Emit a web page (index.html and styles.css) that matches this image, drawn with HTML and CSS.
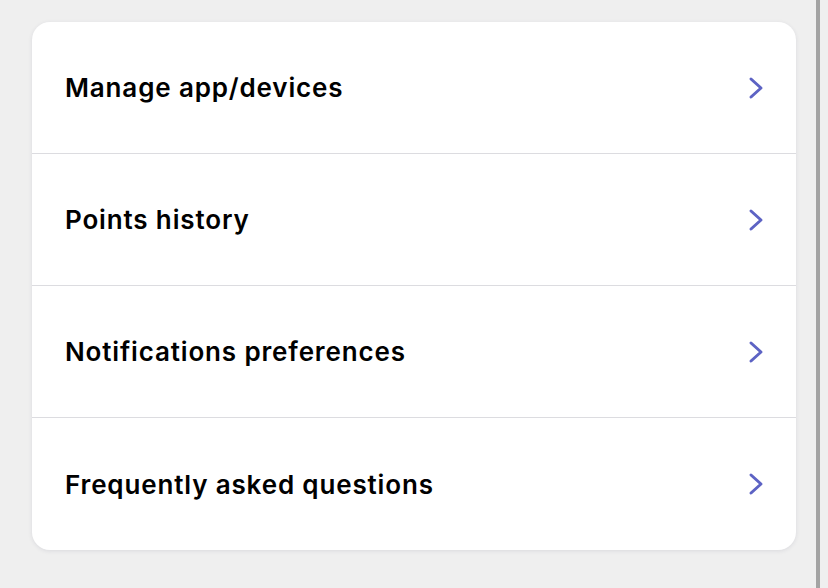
FILE: index.html
```html
<!DOCTYPE html>
<html>
<head>
<meta charset="utf-8">
<link rel="stylesheet" href="styles.css">
</head>
<body>
<div class="page">
  <div class="card">
    <div class="row"><span class="label">Manage app/devices</span><svg class="chev" viewBox="0 0 16 24" width="16" height="24"><path d="M3 3 L13 12 L3 21" fill="none" stroke="#5d63c4" stroke-width="3" stroke-linecap="round" stroke-linejoin="round"/></svg></div>
    <div class="row"><span class="label">Points history</span><svg class="chev" viewBox="0 0 16 24" width="16" height="24"><path d="M3 3 L13 12 L3 21" fill="none" stroke="#5d63c4" stroke-width="3" stroke-linecap="round" stroke-linejoin="round"/></svg></div>
    <div class="row"><span class="label">Notifications preferences</span><svg class="chev" viewBox="0 0 16 24" width="16" height="24"><path d="M3 3 L13 12 L3 21" fill="none" stroke="#5d63c4" stroke-width="3" stroke-linecap="round" stroke-linejoin="round"/></svg></div>
    <div class="row"><span class="label">Frequently asked questions</span><svg class="chev" viewBox="0 0 16 24" width="16" height="24"><path d="M3 3 L13 12 L3 21" fill="none" stroke="#5d63c4" stroke-width="3" stroke-linecap="round" stroke-linejoin="round"/></svg></div>
  </div>
  <div class="scrollbar"></div>
</div>
</body>
</html>
```
FILE: styles.css
```css
html, body {
  margin: 0;
  padding: 0;
  background: #efefef;
}
.page {
  width: 828px;
  height: 588px;
  box-sizing: border-box;
  padding: 22px 0 0 32px;
  display: flex;
  align-items: flex-start;
  position: relative;
  font-family: Inter, "Open Sans", sans-serif;
}
.card {
  width: 764px;
  background: #fff;
  border-radius: 18px;
  box-shadow: 0 1px 4px rgba(40,40,80,0.10);
  display: flex;
  flex-direction: column;
  overflow: hidden;
}
.row {
  height: 131px;
  display: flex;
  align-items: center;
  justify-content: space-between;
  padding: 0 32px 0 33px;
  border-bottom: 1px solid #dcdce0;
}
.row:last-child {
  border-bottom: none;
  height: 132px;
}
.label {
  font-size: 26px;
  font-weight: 600;
  color: #000;
  letter-spacing: 0.85px;
}
.chev {
  display: block;
}
.scrollbar {
  position: absolute;
  top: 0;
  left: 816px;
  width: 4px;
  height: 588px;
  background: #a3a3a3;
}
```
